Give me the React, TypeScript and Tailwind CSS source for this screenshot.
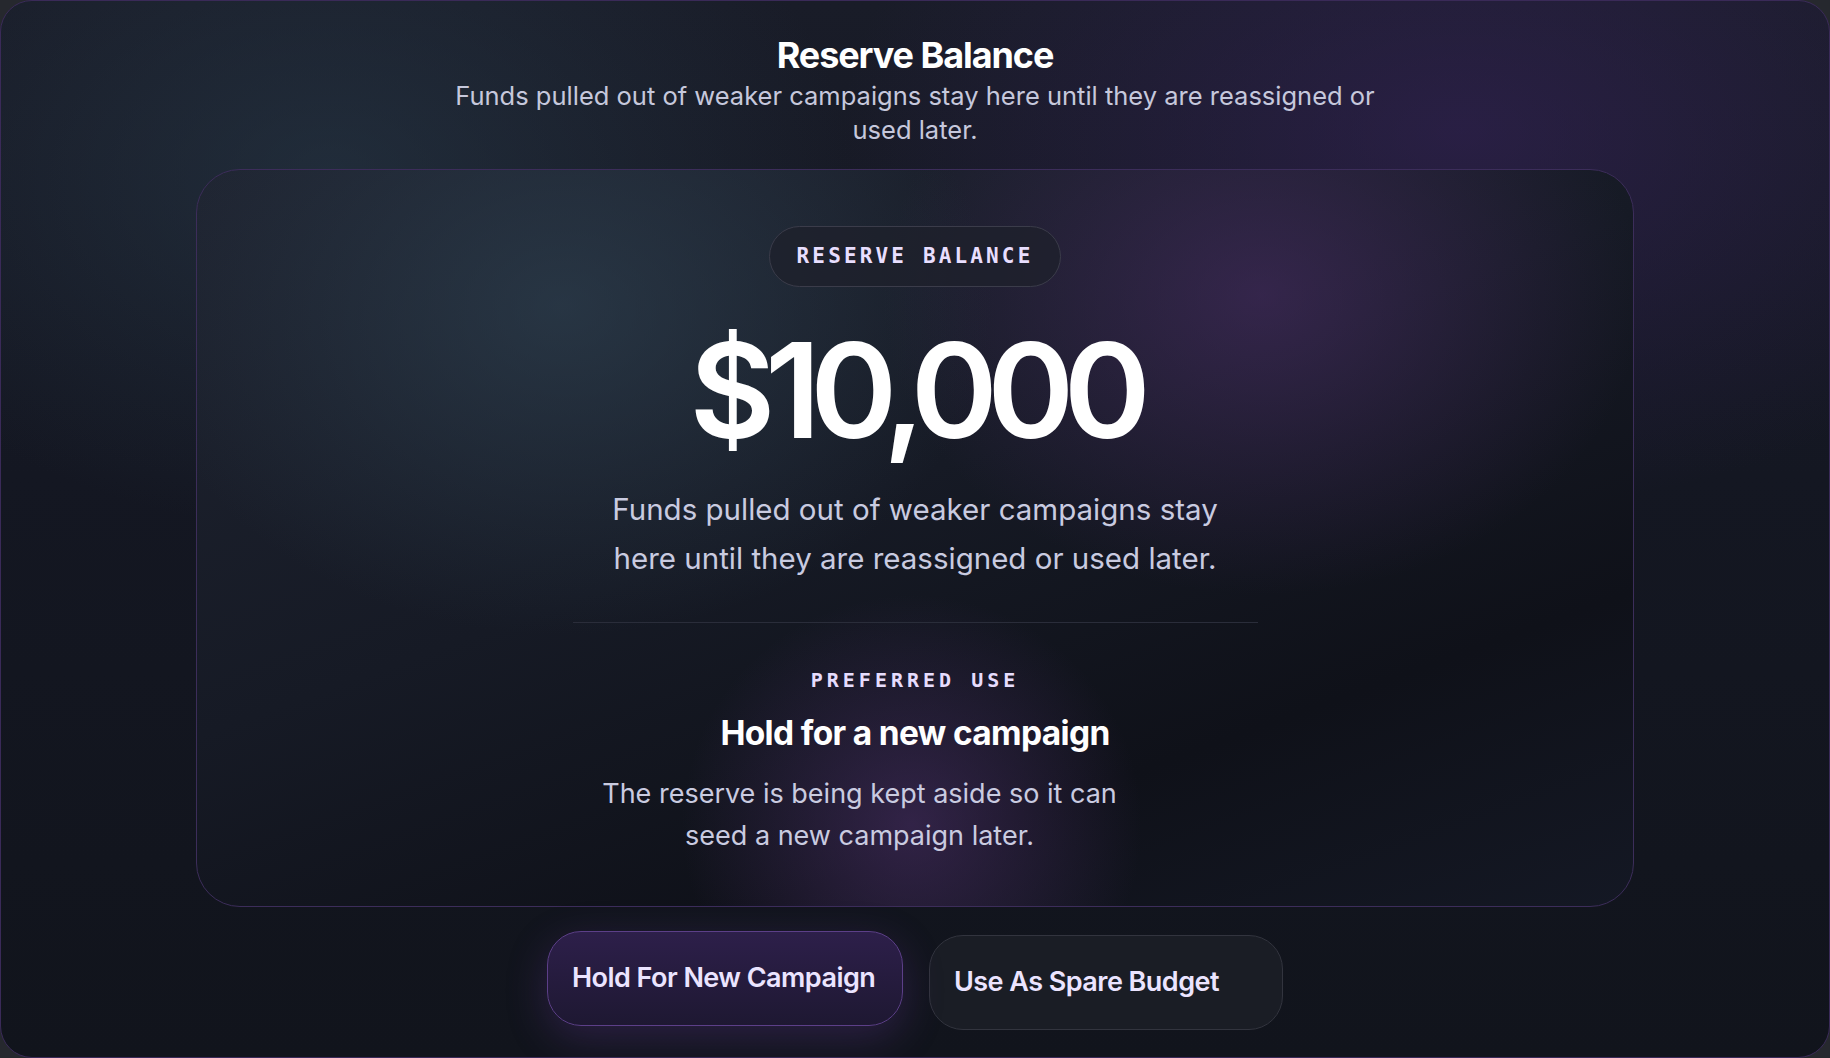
import React from "react";

const sans = "font-['Inter','Noto_Sans',sans-serif]";
const mono = "font-['DejaVu_Sans_Mono','Liberation_Mono',monospace]";

export default function App() {
  return (
    <div className="min-h-screen bg-[#26282e]">
      <div
        className={`${sans} relative h-[1058px] overflow-hidden rounded-[32px] border border-[#3a2a58] bg-[radial-gradient(ellipse_520px_360px_at_330px_170px,rgba(42,62,78,0.5),transparent),radial-gradient(ellipse_620px_380px_at_1460px_130px,rgba(62,36,104,0.45),transparent),linear-gradient(180deg,#191c28_0%,#141722_45%,#11141c_100%)]`}
      >
        <div className="flex flex-col items-center pt-[32px]">
          <h1 className="text-[36px] font-bold leading-[44px] tracking-[-0.03em] text-white">
            Reserve Balance
          </h1>
          <p className="mt-[2px] max-w-[950px] text-center text-[25.5px] leading-[34px] text-[#c6c8dc]">
            Funds pulled out of weaker campaigns stay here until they are reassigned or used later.
          </p>

          <div className="mt-[22px] w-[1438px] rounded-[44px] border border-[#3c2d5a] bg-[radial-gradient(ellipse_430px_330px_at_365px_135px,rgba(48,68,84,0.6),transparent),radial-gradient(ellipse_380px_300px_at_1065px_125px,rgba(82,48,112,0.5),transparent),radial-gradient(ellipse_230px_230px_at_715px_655px,rgba(84,52,116,0.5),transparent),linear-gradient(160deg,#1f2431_0%,#161a25_45%,#0f1119_75%,#141824_100%)] px-10 pb-[49px] pt-[56px]">
            <div className="flex flex-col items-center">
              <div className="rounded-full border border-[#3b3c4a] bg-[#1e202c]/80 px-[27px] py-[16px]">
                <span className={`${mono} block text-[21px] font-bold leading-[27px] tracking-[0.15em] text-[#e8defe]`}>
                  RESERVE BALANCE
                </span>
              </div>

              <div className="mt-[28px] text-[132px] font-semibold leading-[150px] tracking-[-0.08em] text-white">
                $10,000
              </div>

              <p className="mt-[20px] max-w-[640px] text-center text-[29.5px] leading-[49px] text-[#c9cbe0]">
                Funds pulled out of weaker campaigns stay here until they are reassigned or used later.
              </p>

              <div className="mt-[39px] w-[685px] border-t border-[#2a2d3a] pt-[45px] text-center">
                <div className={`${mono} text-[20px] font-bold leading-[24px] tracking-[0.2em] text-[#e6dcfd]`}>
                  PREFERRED USE
                </div>
                <div className="mt-[20px] text-[33.5px] font-bold leading-[42px] tracking-[-0.02em] text-white">
                  Hold for a new campaign
                </div>
                <p className="ml-[7px] mt-[19px] max-w-[560px] text-center text-[27px] leading-[42px] text-[#c9cbe0]">
                  The reserve is being kept aside so it can seed a new campaign later.
                </p>
              </div>
            </div>
          </div>

          <div className="mt-[28px] flex items-start gap-[26px]">
            <button className="h-[95px] w-[356px] -translate-y-[4px] rounded-[34px] border border-[#5c3f88] bg-[linear-gradient(180deg,#2d1f4a_0%,#1e1832_100%)] px-6 text-left text-[27px] font-semibold tracking-[-0.02em] text-[#ebe4ff] shadow-[0_12px_40px_rgba(110,60,170,0.28)]">
              Hold For New Campaign
            </button>
            <button className="h-[95px] w-[354px] rounded-[34px] border border-[#32343e] bg-[#1a1d25] px-6 text-left text-[27px] font-semibold tracking-[-0.02em] text-[#ebe4ff]">
              Use As Spare Budget
            </button>
          </div>
        </div>
      </div>
    </div>
  );
}
